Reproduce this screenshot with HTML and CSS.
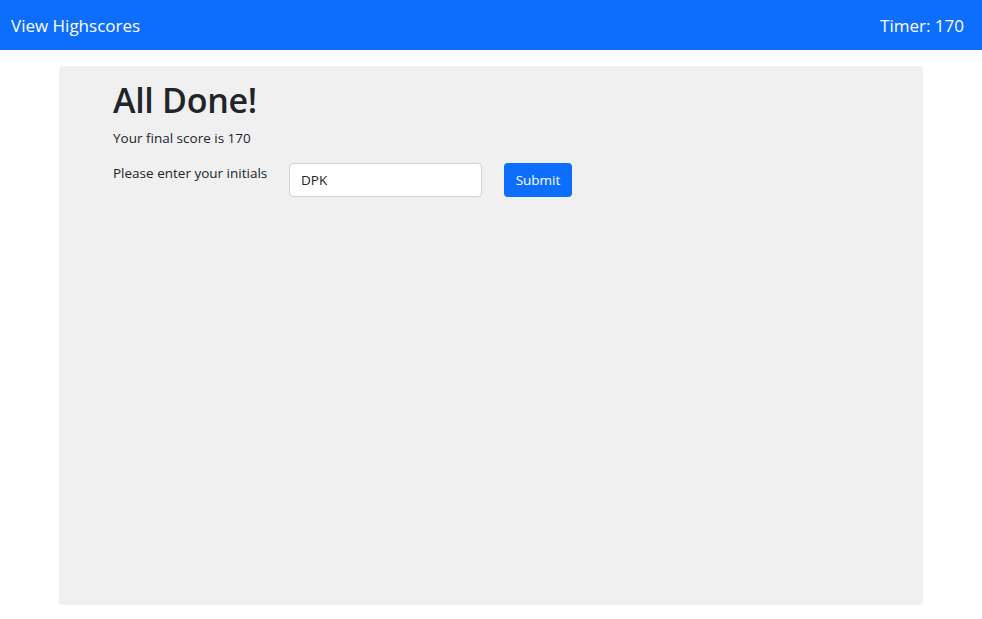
FILE: index.html
```html
<!DOCTYPE html>
<html>
<head>
<meta charset="utf-8">
<link rel="stylesheet" href="styles.css">
</head>
<body>
<nav class="navbar">
  <a class="nav-link">View Highscores</a>
  <span class="timer">Timer: 170</span>
</nav>
<main class="card">
  <h1 class="title">All Done!</h1>
  <p class="score">Your final score is 170</p>
  <form class="form-row">
    <label class="label">Please enter your initials</label>
    <input class="input" type="text" value="DPK">
    <button class="btn" type="button">Submit</button>
  </form>
</main>
</body>
</html>
```
FILE: styles.css
```css
* { box-sizing: border-box; }
body {
  margin: 0;
  font-family: "Open Sans", "Noto Sans", sans-serif;
  color: #212529;
  background: #fff;
}
.navbar {
  height: 50px;
  background: #0d6efd;
  display: flex;
  align-items: center;
  justify-content: space-between;
  padding: 0 18px 0 11px;
  color: #fff;
  font-size: 17px;
}
.card {
  margin: 16px 59px 0 59px;
  height: 539px;
  background: #f0f0f0;
  border-radius: 4px;
  padding: 14px 54px;
}
.title {
  margin: 0;
  font-size: 34px;
  font-weight: 600;
  line-height: 1.2;
  letter-spacing: -0.3px;
}
.score {
  margin: 8px 0 0;
  font-size: 13.5px;
}
.form-row {
  display: flex;
  align-items: flex-start;
  margin-top: 16px;
}
.label {
  font-size: 13.5px;
  margin-top: 1px;
  width: 176px;
}
.input {
  width: 193px;
  height: 34px;
  border: 1px solid #ced4da;
  border-radius: 4px;
  padding: 0 11px;
  font-family: inherit;
  font-size: 13.5px;
  color: #212529;
  background: #fff;
}
.btn {
  margin-left: 22px;
  height: 34px;
  width: 68px;
  background: #0d6efd;
  color: #fff;
  border: none;
  border-radius: 4px;
  font-family: inherit;
  font-size: 13.5px;
}
```
